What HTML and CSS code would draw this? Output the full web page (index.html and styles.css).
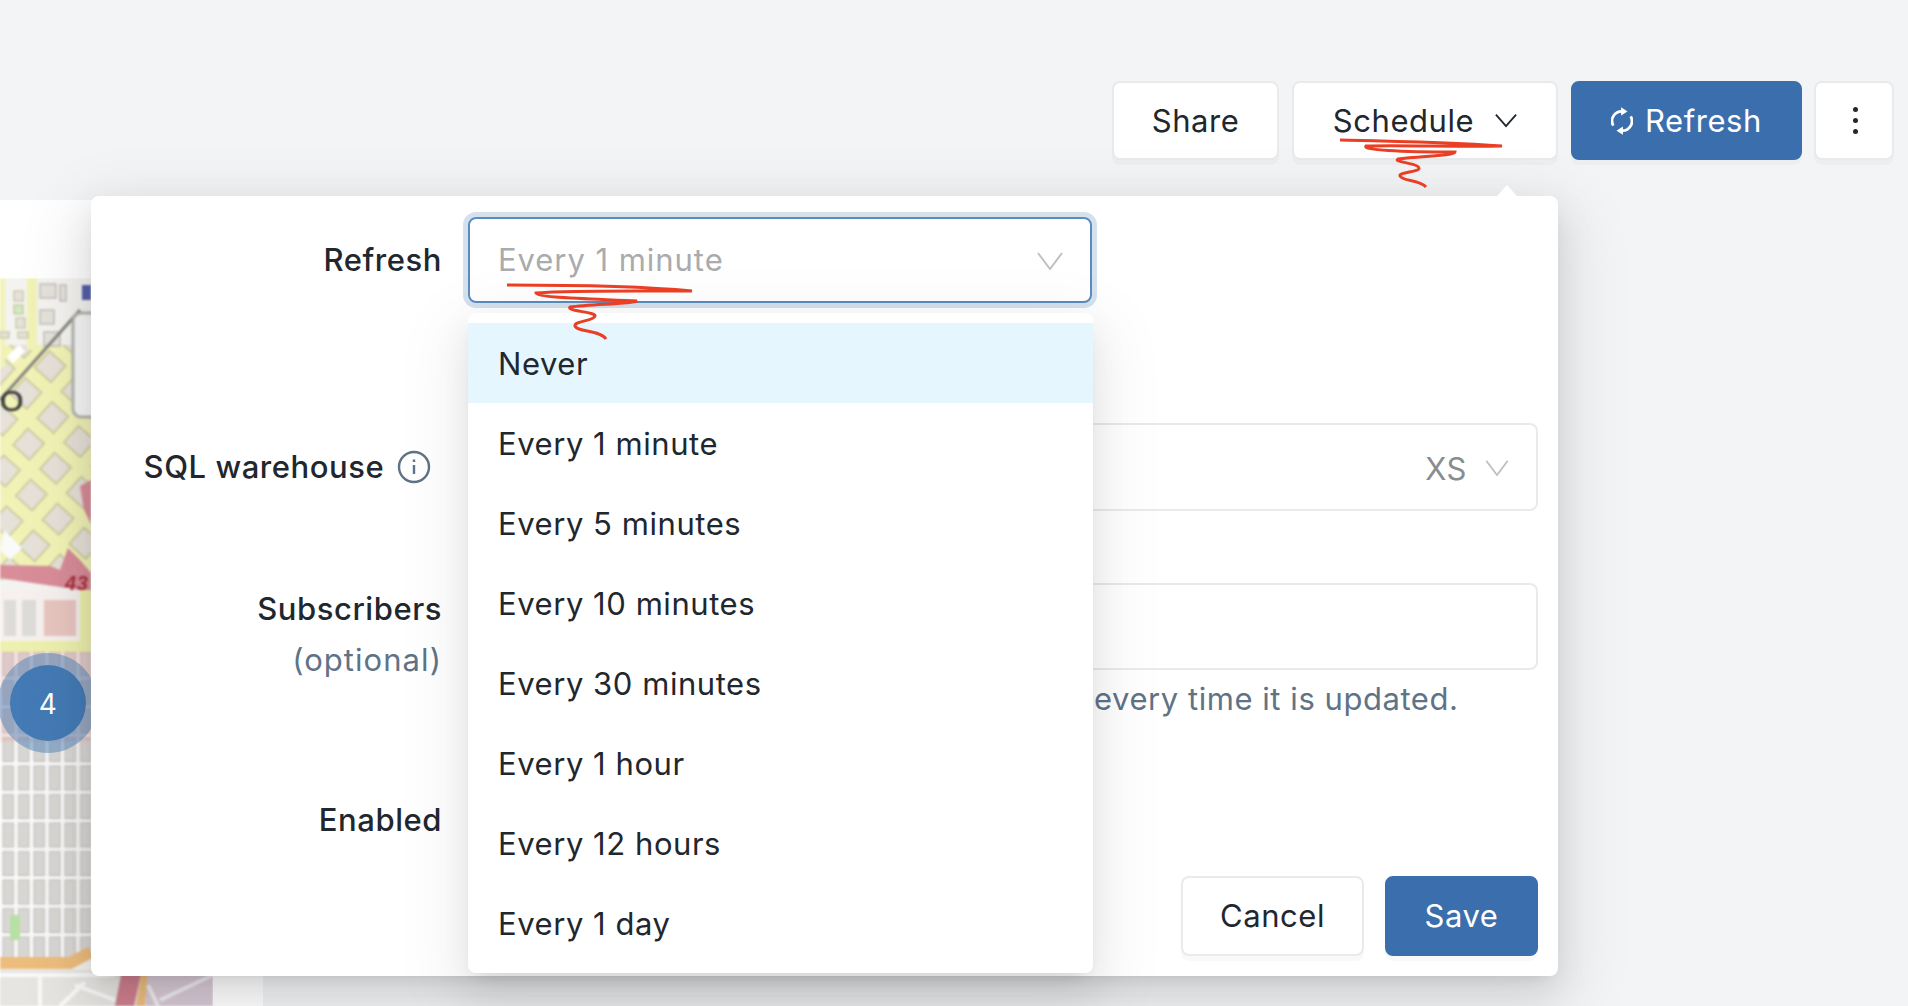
FILE: index.html
```html
<!DOCTYPE html>
<html lang="en">
<head>
  <meta charset="UTF-8">
  <title>Schedule refresh</title>
  <meta name="viewport" content="width=device-width, initial-scale=1.0">
  <link rel="stylesheet" href="styles.css">
</head>
<body>
  <div class="toolbar">
    <button class="btn btn-share">Share</button>
    <button class="btn btn-schedule">Schedule
      <svg class="chevron-dark" viewBox="0 0 24 15"><path d="M1 1l11 12.5L23 1"/></svg>
    </button>
    <button class="btn btn-primary btn-refresh">
      <svg class="sync-icon" viewBox="0 0 24 30">
        <path class="sync-arc" d="M2.5 20A10.5 10.5 0 0 1 13 4.5"/>
        <path class="sync-head" d="M11 0l7 4.5-7 4.5z"/>
        <path class="sync-arc" d="M21.5 10A10.5 10.5 0 0 1 11 25.500"/>
        <path class="sync-head" d="M13 21l-7 4.500 7 4.500z"/>
      </svg>
      Refresh
    </button>
    <button class="btn btn-more" aria-label="More">
      <span class="dot"></span><span class="dot"></span><span class="dot"></span>
    </button>
  </div>

  <div class="widget">
    <svg class="map" viewBox="0 278 213 728" width="213" height="728">
      <defs>
        <pattern id="diamonds" width="36" height="36" patternUnits="userSpaceOnUse" patternTransform="translate(6 12) rotate(42)">
          <rect width="36" height="36" fill="#f1f3b6"/>
          <rect x="7" y="7" width="22" height="22" fill="#e6e1d9" stroke="#cfcea2" stroke-width="2"/>
        </pattern>
        <pattern id="blocks" width="15.5" height="28.5" patternUnits="userSpaceOnUse" patternTransform="translate(1 650)">
          <rect width="15.5" height="28.500" fill="#fafafa"/>
          <rect x="2" y="2" width="10.500" height="24" fill="#d9d7d4" stroke="#bdbcb9"/>
        </pattern>
      </defs>
      <g class="map-art">
        <rect x="0" y="278" width="213" height="728" fill="#f4f3f0"/>
        <rect x="0" y="345" width="91" height="235" fill="url(#diamonds)"/>
        <rect x="0" y="278" width="5" height="90" fill="#f1f3b6"/>
        <rect x="27" y="278" width="10" height="72" fill="#f1f3b6"/>
        <rect x="14" y="291" width="9" height="10" fill="#e6e2da" stroke="#bdbd8e"/>
        <rect x="14" y="305" width="9" height="9" fill="#cfeac4" stroke="#bdbd8e"/>
        <rect x="16" y="318" width="9" height="10" fill="#e6e2da" stroke="#bdbd8e"/>
        <rect x="0" y="332" width="9" height="6" fill="#e6e2da" stroke="#bdbd8e"/>
        <rect x="18" y="332" width="10" height="6" fill="#e6e2da" stroke="#bdbd8e"/>
        <rect x="40" y="284" width="16" height="14" fill="#e6e2da" stroke="#aaa"/>
        <rect x="40" y="310" width="14" height="14" fill="#e6e2da" stroke="#aaa"/>
        <rect x="60" y="285" width="6" height="16" fill="#e6e2da" stroke="#aaa"/>
        <rect x="44" y="332" width="16" height="14" fill="#e6e2da" stroke="#aaa"/>
        <rect x="82" y="285" width="9" height="15" fill="#5560a8"/>
        <path d="M0 400L80 310" stroke="#85857f" stroke-width="3" fill="none"/>
        <path d="M10 360L22 348" stroke="#fff" stroke-width="9" fill="none"/>
        <rect x="73" y="313" width="40" height="104" rx="8" fill="#f7f7f7" stroke="#b4b4ae" stroke-width="3"/>
        <text class="map-label" x="0" y="411">O</text>
        <path d="M80 486L91 480V524L84 510Z" fill="#d98d99"/>
        <path d="M0 565L50 566L60 570L68 548L80 560L91 573V592L60 587L0 578Z" fill="#d98d99"/>
        <path d="M4 530L22 548L10 560L0 550Z" fill="#fafafa"/>
        <text class="map-shield" x="65" y="590">43</text>
        <rect x="0" y="590" width="91" height="62" fill="#f6f1ee"/>
        <rect x="44" y="600" width="32" height="36" fill="#e8c6c0"/>
        <rect x="4" y="600" width="12" height="36" fill="#dedcd8"/>
        <rect x="22" y="600" width="14" height="36" fill="#dedcd8"/>
        <rect x="0" y="641" width="91" height="11" fill="#eef0ad"/>
        <rect x="80" y="590" width="11" height="60" fill="#eef0ad"/>
        <rect x="0" y="652" width="91" height="305" fill="url(#blocks)"/>
        <rect x="0" y="652" width="91" height="90" fill="#eb9f9f" fill-opacity="0.25"/>
        <rect x="10" y="915" width="10" height="25" fill="#b6e0a4"/>
        <path d="M0 963H70L91 952" stroke="#edbd7d" stroke-width="12" fill="none"/>
        <rect x="0" y="970" width="213" height="36" fill="#e6e5e2"/>
        <path d="M0 975H115M40 975V1006M75 985L115 1000M60 1006L85 982" stroke="#fafafa" stroke-width="4" fill="none"/>
        <rect x="146" y="970" width="67" height="36" fill="#d7c9d5"/>
        <path d="M122 970L115 1006H134L142 970Z" fill="#cf7f8e"/>
        <path d="M142 970L136 1006H145L148 970Z" fill="#edbd7d"/>
        <path d="M148 985L158 1006M160 1000L213 975" stroke="#f0eef0" stroke-width="4" fill="none"/>
      </g>
      <circle cx="48" cy="703" r="50" fill="#4079b5" fill-opacity="0.45"/>
      <circle cx="48" cy="703" r="38" fill="#3f78b4" fill-opacity="0.95"/>
      <text class="map-count" x="48" y="714">4</text>
    </svg>
  </div>

  <div class="popover">
    <div class="form-row row-refresh">
      <label class="form-label">Refresh</label>
      <div class="select select-focused">
        <span class="select-value">Every 1 minute</span>
        <svg class="chevron" viewBox="0 0 26 18"><path d="M1 1l12 16L25 1"/></svg>
      </div>
    </div>

    <div class="form-row row-warehouse">
      <label class="form-label">SQL warehouse
        <svg class="info-icon" viewBox="0 0 34 34">
          <circle cx="17" cy="17" r="15" />
          <path d="M17 15v9"/>
          <path d="M17 9.5v2.5"/>
        </svg>
      </label>
      <div class="select">
        <span class="select-size">XS</span>
        <svg class="chevron chevron-small" viewBox="0 0 26 18"><path d="M1 1l12 16L25 1"/></svg>
      </div>
    </div>

    <div class="form-row row-subscribers">
      <label class="form-label">Subscribers<span class="optional">(optional)</span></label>
      <div>
        <div class="text-input"></div>
        <div class="help">every time it is updated.</div>
      </div>
    </div>

    <div class="form-row row-enabled">
      <label class="form-label">Enabled</label>
      <span class="toggle"></span>
    </div>

    <div class="form-footer">
      <button class="btn btn-cancel">Cancel</button>
      <button class="btn btn-primary btn-save">Save</button>
    </div>

    <div class="dropdown">
      <div class="option option-active">Never</div>
      <div class="option">Every 1 minute</div>
      <div class="option">Every 5 minutes</div>
      <div class="option">Every 10 minutes</div>
      <div class="option">Every 30 minutes</div>
      <div class="option">Every 1 hour</div>
      <div class="option">Every 12 hours</div>
      <div class="option">Every 1 day</div>
    </div>
  </div>

  <!-- red pen marks on top of the screenshot -->
  <svg class="scribbles" viewBox="0 0 1908 1006">
    <path d="M1340 140C1390 141 1450 142 1502 146C1460 147 1400 145 1366 146C1362 150 1400 152 1455 152C1455 156 1420 156 1398 159C1392 162 1418 163 1419 168C1420 172 1398 172 1400 176C1402 181 1420 180 1426 187"/>
    <path d="M507 285C560 285 640 286 692 291C650 291 560 290 536 293C536 298 600 299 637 301C630 304 590 304 570 307C566 311 596 312 595 316C594 321 574 321 575 326C577 332 600 330 606 339"/>
  </svg>
</body>
</html>
```

FILE: styles.css
```css
* {
  box-sizing: border-box;
}

body {
  margin: 0;
  height: 100vh;
  overflow: hidden;
  position: relative;
  font-family: Inter, 'Noto Sans', sans-serif;
  font-size: 31px;
  letter-spacing: 0.55px;
  color: #21272e;
  background: #f3f4f6;
}

.toolbar {
  display: flex;
  justify-content: flex-end;
  gap: 13px;
  height: 160px;
  padding: 81px 14px 0 0;
}

.btn {
  display: inline-flex;
  align-items: center;
  justify-content: center;
  height: 79px;
  font-family: inherit;
  font-size: 31px;
  letter-spacing: inherit;
  color: #21272e;
  background: #fff;
  border: 2px solid #e9eaec;
  border-radius: 8px;
  box-shadow: 0 5px 0 rgba(0,0,0,0.025);
}

.btn-primary {
  color: #fff;
  background: #3b6ead;
  border-color: #3b6ead;
}

.btn-share {
  width: 167px;
}

.btn-schedule {
  width: 266px;
  gap: 21px;
}

.btn-refresh {
  width: 231px;
  gap: 12px;
}

.btn-more {
  width: 80px;
  margin-left: -1px;
  padding-right: 3px;
  flex-direction: column;
  gap: 6px;
}

.dot {
  width: 5px;
  height: 5px;
  border-radius: 50%;
  background: #21272e;
}

.chevron-dark {
  width: 22px;
  height: 15px;
  fill: none;
  stroke: #21272e;
  stroke-width: 2;
}

.sync-icon {
  width: 22px;
  height: 28px;
}

.sync-arc {
  fill: none;
  stroke: #fff;
  stroke-width: 3;
}

.sync-head {
  fill: #fff;
}

.widget {
  width: 263px;
  height: 846px;
  margin-top: 40px;
  padding-top: 78px;
  background: #fff;
}

.map {
  display: block;
}

.map-art {
  filter: blur(0.9px);
}

.map-label {
  font-family: 'Liberation Sans', sans-serif;
  font-size: 30px;
  fill: #3a3a3a;
  stroke: #3a3a3a;
  stroke-width: 0.6;
}

.map-shield {
  font-family: 'Liberation Sans', sans-serif;
  font-size: 20px;
  font-style: italic;
  font-weight: bold;
  fill: #a8303c;
}

.map-count {
  font-size: 28px;
  fill: #fff;
  text-anchor: middle;
}

.popover {
  position: absolute;
  left: 91px;
  top: 196px;
  width: 1467px;
  height: 780px;
  padding: 21px 20px 0 0;
  background: #fff;
  border-radius: 8px;
  box-shadow: 0 7px 14px -9px rgba(0,0,0,0.12), 0 14px 37px rgba(0,0,0,0.1), 0 21px 65px 19px rgba(0,0,0,0.07);
}

.popover::before {
  content: "";
  position: absolute;
  left: 1406px;
  top: -11px;
  border-left: 10px solid transparent;
  border-right: 10px solid transparent;
  border-bottom: 11px solid #fff;
}

.form-row {
  display: grid;
  grid-template-columns: 351px 1fr;
  column-gap: 26px;
}

.form-label {
  font-weight: 450;
  line-height: 86px;
  text-align: right;
}

.row-refresh {
  height: 86px;
  margin-bottom: 120px;
}

.row-warehouse {
  height: 87px;
  margin-bottom: 73px;
}

.row-warehouse .form-label {
  line-height: 88px;
}

.row-subscribers {
  height: 137px;
  margin-bottom: 80px;
}

.row-subscribers .form-label {
  line-height: 51px;
}

.row-enabled {
  height: 40px;
}

.row-enabled .form-label {
  line-height: 40px;
}

.optional {
  display: block;
  font-weight: 400;
  letter-spacing: 1.05px;
  color: #5f7387;
}

.info-icon {
  width: 34px;
  height: 34px;
  margin: 0 11px 0 4px;
  vertical-align: -6px;
  fill: none;
  stroke: #5f7387;
  stroke-width: 2.4;
}

.select {
  display: flex;
  align-items: center;
  justify-content: flex-end;
  height: 100%;
  padding: 0 27px 0 28px;
  border: 2px solid #e9eaec;
  border-radius: 8px;
}

.select-focused {
  width: 624px;
  justify-content: space-between;
  border-color: #5a8cc2;
  box-shadow: 0 0 0 5px #d6e1ee;
}

.select-value {
  margin-bottom: 2px;
  letter-spacing: 0.95px;
  color: #a9abad;
}

.select-size {
  margin: 2px 18px 0 0;
  color: #8a8d90;
}

.chevron {
  width: 26px;
  height: 18px;
  margin-top: 2px;
  fill: none;
  stroke: #bfc1c3;
  stroke-width: 2;
}

.chevron-small {
  width: 24px;
  height: 16px;
}

.text-input {
  height: 87px;
  border: 2px solid #e9eaec;
  border-radius: 8px;
}

.help {
  padding: 5px 0 0 626px;
  line-height: 47px;
  color: #5f7387;
}

.toggle {
  width: 80px;
  height: 16px;
  margin-top: 12px;
  border-radius: 8px;
  background: #3b6ead;
}

.form-footer {
  display: flex;
  justify-content: flex-end;
  gap: 21px;
  margin-top: 36px;
}

.btn-cancel {
  width: 183px;
  height: 80px;
  padding-bottom: 2px;
}

.btn-save {
  width: 153px;
  height: 80px;
  padding-bottom: 2px;
}

.dropdown {
  position: absolute;
  left: 377px;
  top: 117px;
  width: 625px;
  padding: 10px 0;
  background: #fff;
  border-radius: 8px;
  box-shadow: 0 7px 14px -9px rgba(0,0,0,0.12), 0 14px 37px rgba(0,0,0,0.08), 0 21px 65px 19px rgba(0,0,0,0.05);
}

.option {
  height: 80px;
  padding-left: 30px;
  line-height: 82px;
}

.option-active {
  background: #e6f6ff;
}

.scribbles {
  position: absolute;
  left: 0;
  top: 0;
  width: 1908px;
  height: 1006px;
  fill: none;
  stroke: #ea3f24;
  stroke-width: 3;
  pointer-events: none;
}
```
